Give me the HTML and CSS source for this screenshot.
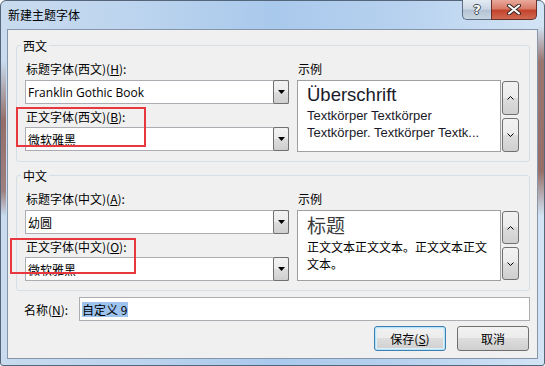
FILE: index.html
```html
<!DOCTYPE html>
<html lang="zh-CN">
<head>
<meta charset="utf-8">
<title>新建主题字体</title>
<link rel="stylesheet" href="styles.css">
</head>
<body>
<div class="window">
  <div class="titlebar">
    <span class="title">新建主题字体</span>
    <div class="caption-btns">
      <div class="cbtn help"><span class="qmark">?</span></div>
      <div class="cbtn close">
        <svg width="14" height="11" viewBox="0 0 14 11"><path d="M2 1.5 L12 9.5 M12 1.5 L2 9.5" stroke="#3a2a28" stroke-width="4" stroke-linecap="round"/><path d="M2 1.5 L12 9.5 M12 1.5 L2 9.5" stroke="#fff" stroke-width="2" stroke-linecap="round"/></svg>
      </div>
    </div>
  </div>
  <div class="client">
    <fieldset class="group">
      <legend>西文</legend>
      <div class="group-body">
        <div class="col-left">
          <div class="label">标题字体(西文)(<u>H</u>):</div>
          <div class="combo"><span class="combo-text latin-ui">Franklin Gothic Book</span><span class="drop"><svg width="7" height="4" viewBox="0 0 7 4"><path d="M0 0 H7 L3.5 4 Z" fill="#000"/></svg></span></div>
          <div class="label second">正文字体(西文)(<u>B</u>):</div>
          <div class="combo"><span class="combo-text">微软雅黑</span><span class="drop"><svg width="7" height="4" viewBox="0 0 7 4"><path d="M0 0 H7 L3.5 4 Z" fill="#000"/></svg></span></div>
        </div>
        <div class="col-right">
          <div class="label">示例</div>
          <div class="preview-row">
            <div class="preview latin">
              <div class="pv-head">Überschrift</div>
              <div class="pv-body">Textkörper Textkörper</div>
              <div class="pv-body">Textkörper. Textkörper Textk...</div>
            </div>
            <div class="spin">
              <div class="sbtn"><svg width="7" height="4" viewBox="0 0 7 4"><path d="M0.5 3.5 L3.5 0.5 L6.5 3.5" fill="none" stroke="#000" stroke-width="1"/></svg></div>
              <div class="sbtn"><svg width="7" height="4" viewBox="0 0 7 4"><path d="M0.5 0.5 L3.5 3.5 L6.5 0.5" fill="none" stroke="#000" stroke-width="1"/></svg></div>
            </div>
          </div>
        </div>
      </div>
    </fieldset>

    <fieldset class="group group2">
      <legend>中文</legend>
      <div class="group-body">
        <div class="col-left">
          <div class="label">标题字体(中文)(<u>A</u>):</div>
          <div class="combo"><span class="combo-text">幼圆</span><span class="drop"><svg width="7" height="4" viewBox="0 0 7 4"><path d="M0 0 H7 L3.5 4 Z" fill="#000"/></svg></span></div>
          <div class="label second">正文字体(中文)(<u>O</u>):</div>
          <div class="combo"><span class="combo-text">微软雅黑</span><span class="drop"><svg width="7" height="4" viewBox="0 0 7 4"><path d="M0 0 H7 L3.5 4 Z" fill="#000"/></svg></span></div>
        </div>
        <div class="col-right">
          <div class="label">示例</div>
          <div class="preview-row short">
            <div class="preview cjk">
              <div class="pv-head">标题</div>
              <div class="pv-body">正文文本正文文本。正文文本正文文本。</div>
            </div>
            <div class="spin">
              <div class="sbtn"><svg width="7" height="4" viewBox="0 0 7 4"><path d="M0.5 3.5 L3.5 0.5 L6.5 3.5" fill="none" stroke="#000" stroke-width="1"/></svg></div>
              <div class="sbtn"><svg width="7" height="4" viewBox="0 0 7 4"><path d="M0.5 0.5 L3.5 3.5 L6.5 0.5" fill="none" stroke="#000" stroke-width="1"/></svg></div>
            </div>
          </div>
        </div>
      </div>
    </fieldset>

    <div class="name-row">
      <span class="name-label">名称(<u>N</u>):</span>
      <div class="name-input"><span class="sel">自定义 9</span></div>
    </div>

    <div class="btn-row">
      <div class="btn default">保存(<u>S</u>)</div>
      <div class="btn">取消</div>
    </div>
  </div>
</div>
<div class="mark mark1"></div>
<div class="mark mark2"></div>
</body>
</html>
```

FILE: styles.css
```css
* { box-sizing: border-box; }
html, body { margin: 0; padding: 0; }
body {
  width: 545px;
  height: 366px;
  overflow: hidden;
  position: relative;
  background: #ffffff;
  font-family: "Noto Sans CJK SC", "Noto Sans", sans-serif;
  font-size: 12px;
  color: #000;
}
u { text-decoration: underline; text-underline-offset: 1px; text-decoration-thickness: 1px; }

.window {
  width: 545px;
  height: 366px;
  border: 1px solid #55667a;
  border-radius: 6px 6px 3px 3px;
  display: flex;
  flex-direction: column;
  background:
    linear-gradient(to bottom, rgba(140,90,80,0) 60px, rgba(140,90,80,0.85) 120px, rgba(140,90,80,0.7) 190px, rgba(140,90,80,0) 215px) left top / 5px 100% no-repeat,
    linear-gradient(to bottom, rgba(140,90,80,0) 25px, rgba(140,90,80,0.8) 60px, rgba(140,90,80,0.85) 170px, rgba(140,90,80,0) 215px) right top / 6px 100% no-repeat,
    linear-gradient(to right, #c8dbef 0%, #bcd4ee 25%, #a9c9ec 50%, #b8d2ef 75%, #d3e4f5 100%);
}

.titlebar {
  height: 28px;
  display: flex;
  align-items: flex-start;
  flex: none;
}
.title {
  padding-left: 7px;
  line-height: 28px;
  font-size: 12px;
  color: #000;
}
.caption-btns {
  margin-left: auto;
  margin-right: 7px;
  margin-top: -1px;
  display: flex;
}
.cbtn {
  height: 20px;
  display: flex;
  align-items: center;
  justify-content: center;
  border: 1px solid #5c6d82;
  border-top: none;
}
.help {
  width: 29px;
  border-radius: 0 0 0 5px;
  border-right: none;
  background: linear-gradient(to bottom, #e3eaf2 0%, #cdd8e4 45%, #b4c3d4 55%, #c8d5e2 100%);
}
.qmark {
  font-family: "DejaVu Sans", sans-serif;
  font-weight: bold;
  font-size: 13px;
  line-height: 13px;
  color: #fff;
  text-shadow: 1px 0 0 #3d4a5a, -1px 0 0 #3d4a5a, 0 1px 0 #3d4a5a, 0 -1px 0 #3d4a5a;
}
.close {
  width: 46px;
  border-radius: 0 0 5px 0;
  border-color: #6a2f27;
  background: linear-gradient(to bottom, #e9a99b 0%, #d87b69 45%, #c4432d 55%, #d06a52 100%);
}

.client {
  margin: 0 6px;
  height: 330px;
  border: 1px solid #8596ab;
  background: #f0f0f0;
  padding: 7px 7px 0 8px;
  display: flex;
  flex-direction: column;
  flex: none;
}

.group {
  margin: 0;
  border: 1px solid #d5dfe5;
  border-radius: 3px;
  padding: 7px 10px 9px 8px;
  min-width: 0;
}
.group legend {
  padding: 0 2px;
  margin-left: -4px;
  line-height: 17px;
  font-size: 12px;
}
.group2 { margin-top: 5px; }

.group-body {
  display: flex;
  gap: 8px;
}
.col-left { width: 264px; flex: none; }
.col-right { width: 222px; flex: none; }

.label {
  line-height: 16px;
  height: 16px;
  margin-bottom: 3px;
  padding-left: 1px;
  white-space: nowrap;
}
.label.second { margin-top: 5px; margin-bottom: 2px; }

.combo {
  height: 24px;
  border: 1px solid #abadb3;
  background: #fff;
  display: flex;
  align-items: center;
}
.combo-text {
  padding-left: 2px;
  flex: 1;
  white-space: nowrap;
}
.combo-text.latin-ui {
  font-family: "Open Sans", "Noto Sans", sans-serif;
  font-size: 12px;
}
.drop {
  width: 16px;
  height: 24px;
  margin: -1px -1px -1px 0;
  border: 1px solid #707070;
  border-radius: 2px;
  background: linear-gradient(to bottom, #f2f2f2 0%, #ebebeb 50%, #dddddd 50%, #cfcfcf 100%);
  display: flex;
  align-items: center;
  justify-content: center;
  flex: none;
}

.preview-row {
  display: flex;
  height: 72px;
}
.preview-row.short { height: 71px; }
.preview {
  width: 204px;
  flex: none;
  border: 1px solid #a0a0a0;
  background: #fff;
  padding: 2px 4px 0 9px;
  overflow: hidden;
}
.preview.latin { font-family: "Liberation Sans", Arial, sans-serif; color: #1a1a2a; }
.latin .pv-head { font-size: 18.5px; line-height: 24px; }
.latin .pv-body { font-size: 13px; line-height: 17px; white-space: nowrap; }
.preview.cjk { padding-top: 1px; }
.cjk .pv-head { font-size: 19px; line-height: 26px; color: #3a3a3a; }
.cjk .pv-body { font-size: 12px; line-height: 17px; color: #000; }

.spin {
  width: 17px;
  margin-left: 1px;
  padding-top: 1px;
  display: flex;
  flex-direction: column;
  gap: 3px;
  flex: none;
}
.sbtn {
  height: 34px;
  border: 1px solid #707070;
  border-radius: 3px;
  background: linear-gradient(to bottom, #f2f2f2 0%, #ebebeb 50%, #dddddd 50%, #cfcfcf 100%);
  display: flex;
  align-items: center;
  justify-content: center;
}
.short .sbtn { height: 33px; }

.name-row {
  margin-top: 6px;
  height: 24px;
  display: flex;
  align-items: center;
  padding-left: 8px;
}
.name-label {
  width: 55px;
  flex: none;
  white-space: nowrap;
}
.name-input {
  flex: 1;
  height: 24px;
  border: 1px solid #abadb3;
  background: #fff;
  display: flex;
  align-items: center;
  padding-left: 2px;
}
.sel {
  background: #9dc3ee;
  color: #000;
  line-height: 15px;
  padding: 0 1px 0 0;
}

.btn-row {
  margin-top: 5px;
  display: flex;
  justify-content: flex-end;
  gap: 11px;
  padding-right: 1px;
}
.btn {
  width: 72px;
  height: 25px;
  border: 1px solid #707070;
  border-radius: 3px;
  background: linear-gradient(to bottom, #f2f2f2 0%, #ebebeb 50%, #dddddd 50%, #cfcfcf 100%);
  display: flex;
  align-items: center;
  justify-content: center;
}
.btn.default {
  border-color: #3c7fb1;
  box-shadow: inset 0 0 0 1px #b7e2f8, inset 0 0 0 2px #daf1fc;
}

.mark {
  position: absolute;
  border: 2px solid #e8383d;
}
.mark1 { left: 16px; top: 107px; width: 130px; height: 40px; }
.mark2 { left: 10px; top: 238px; width: 126px; height: 36px; }
```
